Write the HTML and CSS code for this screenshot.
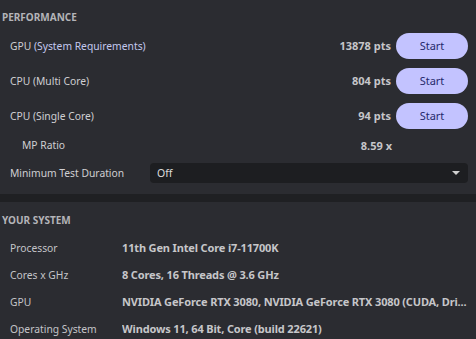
FILE: index.html
```html
<!DOCTYPE html>
<html lang="en">
<head>
    <meta charset="UTF-8">
    <meta name="viewport" content="width=device-width, initial-scale=1.0">
    <title>Performance</title>
    <link rel="stylesheet" href="styles.css">
</head>
<body>
    <section class="perf">
        <h3 class="section-title">PERFORMANCE</h3>

        <div class="bench-row">
            <span class="bench-label">GPU <span class="hint">(System Requirements)</span></span>
            <span class="bench-score">13878 pts</span>
            <button class="start-btn">Start</button>
        </div>
        <div class="bench-row">
            <span class="bench-label">CPU (Multi Core)</span>
            <span class="bench-score">804 pts</span>
            <button class="start-btn">Start</button>
        </div>
        <div class="bench-row">
            <span class="bench-label">CPU (Single Core)</span>
            <span class="bench-score">94 pts</span>
            <button class="start-btn">Start</button>
        </div>
        <div class="ratio-row">
            <span class="bench-label">MP Ratio</span>
            <span class="bench-score">8.59 x</span>
        </div>
        <div class="duration-row">
            <span class="duration-label">Minimum Test Duration</span>
            <div class="dropdown">
                <span>Off</span>
                <span class="caret"></span>
            </div>
        </div>
    </section>

    <div class="divider"></div>

    <section class="system">
        <h3 class="section-title">YOUR SYSTEM</h3>
        <div class="info-row">
            <span class="info-label">Processor</span>
            <span class="info-value">11th Gen Intel Core i7-11700K</span>
        </div>
        <div class="info-row">
            <span class="info-label">Cores x GHz</span>
            <span class="info-value">8 Cores, 16 Threads @ 3.6 GHz</span>
        </div>
        <div class="info-row">
            <span class="info-label">GPU</span>
            <span class="info-value">NVIDIA GeForce RTX 3080, NVIDIA GeForce RTX 3080 (CUDA, Dri...</span>
        </div>
        <div class="info-row">
            <span class="info-label">Operating System</span>
            <span class="info-value">Windows 11, 64 Bit, Core (build 22621)</span>
        </div>
    </section>
</body>
</html>
```

FILE: styles.css
```css
/* Global Styles */
body {
    font-family: "Noto Sans", "Open Sans", sans-serif;
    font-size: 10.3px;
    margin: 0;
    padding: 0;
    background-color: #2b2c31;
    color: #cfcfd2;
    overflow: hidden;
}

.section-title {
    margin: 0;
    padding: 7px 0 1px 2px;
    line-height: 20px;
    font-size: 10px;
    font-weight: bold;
    color: #b4b4b8;
}

/* Performance */
.bench-row {
    display: flex;
    align-items: center;
    height: 35px;
    padding: 0 8px 0 10px;
}
.bench-label {
    flex: 1;
}
.hint {
    color: #c3c8ee;
}
.bench-score {
    font-size: 11px;
    font-weight: bold;
    color: #c6c6c9;
    margin-right: 5px;
}
.start-btn {
    width: 72px;
    height: 26px;
    border: none;
    border-radius: 13px;
    background-color: #c3c3ff;
    color: #262a6c;
    font-family: inherit;
    font-size: 11px;
    padding: 0;
    cursor: pointer;
}

.ratio-row {
    display: flex;
    align-items: center;
    height: 24px;
    padding: 0 84px 0 22px;
}
.ratio-row .bench-score {
    margin-right: 0;
}

.duration-row {
    display: flex;
    align-items: center;
    height: 32px;
    padding: 0 8px 0 10px;
}
.duration-label {
    width: 140px;
}
.dropdown {
    flex: 1;
    display: flex;
    align-items: center;
    justify-content: space-between;
    height: 20px;
    padding: 0 8px 0 7px;
    background-color: #1d1e21;
    border-radius: 4px;
    color: #dcdcdc;
    font-size: 10.5px;
}
.caret {
    width: 0;
    height: 0;
    border-left: 4px solid transparent;
    border-right: 4px solid transparent;
    border-top: 4px solid #d0d0d0;
}

.divider {
    height: 8px;
    margin-top: 5px;
    background-color: #1f2023;
}

/* System info */
.system .section-title {
    padding: 8px 0 4px 2px;
}
.info-row {
    display: flex;
    align-items: center;
    height: 27px;
    padding: 0 8px 0 10px;
}
.info-label {
    width: 112px;
    flex-shrink: 0;
    color: #c4c4c8;
}
.info-value {
    flex: 1;
    min-width: 0;
    font-size: 11px;
    font-weight: bold;
    letter-spacing: -0.15px;
    color: #c6c6c9;
    white-space: nowrap;
    overflow: hidden;
}
```
